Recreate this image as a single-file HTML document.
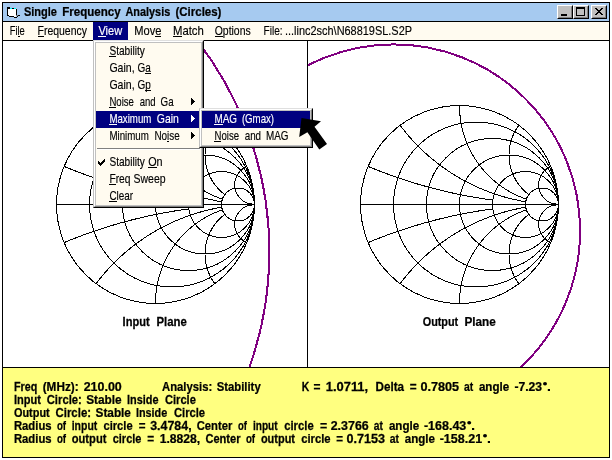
<!DOCTYPE html><html><head><meta charset="utf-8"><title>Single Frequency Analysis (Circles)</title><style>
html,body{margin:0;padding:0;background:#fff;}
body{width:612px;height:460px;overflow:hidden;position:relative;font-family:"Liberation Sans",sans-serif;color:#000;}
.abs{position:absolute;}
#frame{left:2px;top:2px;width:608px;height:456px;box-sizing:border-box;border:1px solid #000;background:#fff;}
#title{left:3px;top:3px;width:606px;height:18px;background:#A6CAF0;}
#l1{left:3px;top:21px;width:606px;height:1px;background:#000;}
#mbar{left:3px;top:22px;width:606px;height:18px;background:#FFFBF0;}
#l2{left:3px;top:40px;width:606px;height:1px;background:#000;}
#div{left:307px;top:41px;width:1px;height:326px;background:#000;}
#l3{left:3px;top:367px;width:606px;height:1px;background:#000;}
#ypan{left:3px;top:368px;width:606px;height:89px;background:#FFFF80;}
.btn{position:absolute;top:5px;width:16px;height:14px;box-sizing:border-box;background:#C0C0C0;border:1px solid;border-color:#fff #000 #000 #fff;}
.btn:after{content:"";position:absolute;left:0;top:0;right:0;bottom:0;border:1px solid;border-color:#C0C0C0 #808080 #808080 #C0C0C0;}
.menu{position:absolute;box-sizing:border-box;background:#FFFBF0;border:1px solid;border-color:#DFDFDF #000 #000 #C0C0C0;}
.menu:before{content:"";position:absolute;left:0;top:0;right:0;bottom:0;border:1px solid;border-color:#fff #808080 #808080 #fff;}
.menu:after{content:"";position:absolute;left:1px;top:1px;right:1px;bottom:1px;border:1px solid #C0C0C0;}
.hl{position:absolute;background:#000080;}
svg{position:absolute;left:0;top:0;}
svg text{font-family:"Liberation Sans",sans-serif;}
.txt{will-change:transform;}
.txt text[font-weight=bold]{stroke:#000;stroke-width:0.25px;}
.txt text[font-weight=normal]{stroke:currentColor;stroke-width:0.15px;}
</style></head><body>
<div id="frame" class="abs"></div>
<div id="title" class="abs"></div><div id="l1" class="abs"></div><div id="mbar" class="abs"></div><div id="l2" class="abs"></div>
<div id="div" class="abs"></div><div id="l3" class="abs"></div><div id="ypan" class="abs"></div>
<svg width="612" height="460" viewBox="0 0 612 460">
<defs><clipPath id="cl"><rect x="3" y="41" width="304" height="326"/></clipPath><clipPath id="cr"><rect x="308" y="41" width="301" height="326"/></clipPath></defs>
<g fill="none" stroke="#000" stroke-width="1" shape-rendering="crispEdges">
<circle cx="155.50" cy="204.50" r="99.00"/>
<circle cx="172.00" cy="204.50" r="82.50"/>
<circle cx="188.50" cy="204.50" r="66.00"/>
<circle cx="205.00" cy="204.50" r="49.50"/>
<circle cx="221.50" cy="204.50" r="33.00"/>
<circle cx="238.00" cy="204.50" r="16.50"/>
<line x1="56.50" y1="204.50" x2="254.50" y2="204.50"/>
<polyline points="64.12,166.42 64.14,166.43 64.21,166.46 64.33,166.51 64.51,166.59 64.72,166.68 64.99,166.79 65.30,166.92 65.67,167.07 66.07,167.23 66.53,167.42 67.03,167.62 67.57,167.85 68.16,168.09 68.79,168.34 69.46,168.61 70.17,168.90 70.93,169.20 71.72,169.52 72.55,169.85 73.42,170.19 74.33,170.55 75.27,170.91 76.24,171.29 77.25,171.68 78.28,172.07 79.35,172.48 80.45,172.89 81.57,173.31 82.72,173.74 83.89,174.17 85.09,174.61 86.31,175.05 87.55,175.50 88.81,175.95 90.09,176.40 91.39,176.85 92.70,177.31 94.03,177.77 95.37,178.22 96.72,178.68 98.09,179.14 99.46,179.59 100.85,180.05 102.24,180.50 103.64,180.95 105.04,181.40 106.45,181.84 107.87,182.28 109.28,182.72 110.70,183.15 112.12,183.58 113.54,184.00 114.96,184.42 116.37,184.84 117.79,185.25 119.20,185.65 120.61,186.05 122.01,186.44 123.41,186.83 124.81,187.21 126.19,187.58 127.57,187.95 128.95,188.31 130.31,188.67 131.67,189.02 133.02,189.36 134.36,189.70 135.69,190.03 137.02,190.36 138.33,190.67 139.63,190.99 140.92,191.29 142.20,191.59 143.47,191.89 144.73,192.17 145.97,192.46 147.21,192.73 148.43,193.00 149.64,193.27 150.84,193.52 152.03,193.78 153.20,194.02 154.36,194.27 155.51,194.50 156.65,194.73 157.77,194.96 158.88,195.18 159.98,195.39 161.07,195.60 162.14,195.81 163.20,196.01 164.25,196.20 165.29,196.39 166.31,196.58 167.32,196.76 168.32,196.94 169.31,197.11 170.28,197.28 171.24,197.45 172.19,197.61 173.13,197.77 174.06,197.92 174.97,198.07 175.87,198.22 176.76,198.36 177.64,198.50 178.51,198.63 179.37,198.76 180.21,198.89 181.04,199.02 181.87,199.14 182.68,199.26 183.48,199.38 184.27,199.49 185.05,199.60 185.82,199.71 186.58,199.82 187.32,199.92 188.06,200.02 188.79,200.12"/>
<polyline points="64.12,242.58 64.14,242.57 64.21,242.54 64.33,242.49 64.51,242.41 64.72,242.32 64.99,242.21 65.30,242.08 65.67,241.93 66.07,241.77 66.53,241.58 67.03,241.38 67.57,241.15 68.16,240.91 68.79,240.66 69.46,240.39 70.17,240.10 70.93,239.80 71.72,239.48 72.55,239.15 73.42,238.81 74.33,238.45 75.27,238.09 76.24,237.71 77.25,237.32 78.28,236.93 79.35,236.52 80.45,236.11 81.57,235.69 82.72,235.26 83.89,234.83 85.09,234.39 86.31,233.95 87.55,233.50 88.81,233.05 90.09,232.60 91.39,232.15 92.70,231.69 94.03,231.23 95.37,230.78 96.72,230.32 98.09,229.86 99.46,229.41 100.85,228.95 102.24,228.50 103.64,228.05 105.04,227.60 106.45,227.16 107.87,226.72 109.28,226.28 110.70,225.85 112.12,225.42 113.54,225.00 114.96,224.58 116.37,224.16 117.79,223.75 119.20,223.35 120.61,222.95 122.01,222.56 123.41,222.17 124.81,221.79 126.19,221.42 127.57,221.05 128.95,220.69 130.31,220.33 131.67,219.98 133.02,219.64 134.36,219.30 135.69,218.97 137.02,218.64 138.33,218.33 139.63,218.01 140.92,217.71 142.20,217.41 143.47,217.11 144.73,216.83 145.97,216.54 147.21,216.27 148.43,216.00 149.64,215.73 150.84,215.48 152.03,215.22 153.20,214.98 154.36,214.73 155.51,214.50 156.65,214.27 157.77,214.04 158.88,213.82 159.98,213.61 161.07,213.40 162.14,213.19 163.20,212.99 164.25,212.80 165.29,212.61 166.31,212.42 167.32,212.24 168.32,212.06 169.31,211.89 170.28,211.72 171.24,211.55 172.19,211.39 173.13,211.23 174.06,211.08 174.97,210.93 175.87,210.78 176.76,210.64 177.64,210.50 178.51,210.37 179.37,210.24 180.21,210.11 181.04,209.98 181.87,209.86 182.68,209.74 183.48,209.62 184.27,209.51 185.05,209.40 185.82,209.29 186.58,209.18 187.32,209.08 188.06,208.98 188.79,208.88"/>
<polyline points="96.10,125.30 96.13,125.34 96.23,125.48 96.40,125.69 96.63,126.00 96.92,126.39 97.28,126.86 97.71,127.42 98.20,128.05 98.75,128.76 99.37,129.54 100.05,130.39 100.78,131.30 101.58,132.28 102.44,133.32 103.36,134.40 104.33,135.54 105.35,136.73 106.43,137.95 107.56,139.21 108.74,140.51 109.97,141.83 111.24,143.18 112.55,144.54 113.91,145.92 115.30,147.31 116.73,148.71 118.20,150.11 119.69,151.52 121.21,152.92 122.76,154.31 124.33,155.70 125.93,157.08 127.54,158.44 129.17,159.78 130.81,161.11 132.46,162.42 134.12,163.70 135.79,164.97 137.46,166.20 139.13,167.42 140.81,168.60 142.48,169.77 144.15,170.90 145.81,172.00 147.47,173.08 149.12,174.13 150.75,175.14 152.38,176.13 153.99,177.09 155.59,178.03 157.18,178.93 158.75,179.81 160.30,180.66 161.83,181.48 163.35,182.27 164.85,183.04 166.33,183.78 167.79,184.50 169.22,185.20 170.64,185.86 172.04,186.51 173.41,187.13 174.77,187.74 176.10,188.32 177.41,188.88 178.70,189.41 179.96,189.93 181.21,190.44 182.43,190.92 183.63,191.38 184.81,191.83 185.97,192.26 187.11,192.68 188.23,193.08 189.32,193.46 190.40,193.84 191.45,194.19 192.49,194.54 193.50,194.87 194.50,195.19 195.47,195.50 196.43,195.79 197.37,196.08 198.29,196.35 199.19,196.62 200.08,196.87 200.94,197.12 201.79,197.36 202.63,197.58 203.44,197.80 204.24,198.02 205.03,198.22 205.80,198.42 206.55,198.61 207.29,198.79 208.02,198.97 208.73,199.14 209.42,199.30 210.10,199.46 210.77,199.61 211.43,199.76 212.07,199.90 212.70,200.04 213.32,200.17 213.93,200.30 214.52,200.42 215.10,200.54 215.67,200.66 216.23,200.77 216.78,200.87 217.32,200.98 217.85,201.08 218.37,201.18 218.87,201.27 219.37,201.36 219.86,201.45 220.34,201.53 220.81,201.61 221.27,201.69 221.73,201.77"/>
<polyline points="96.10,283.70 96.13,283.66 96.23,283.52 96.40,283.31 96.63,283.00 96.92,282.61 97.28,282.14 97.71,281.58 98.20,280.95 98.75,280.24 99.37,279.46 100.05,278.61 100.78,277.70 101.58,276.72 102.44,275.68 103.36,274.60 104.33,273.46 105.35,272.27 106.43,271.05 107.56,269.79 108.74,268.49 109.97,267.17 111.24,265.82 112.55,264.46 113.91,263.08 115.30,261.69 116.73,260.29 118.20,258.89 119.69,257.48 121.21,256.08 122.76,254.69 124.33,253.30 125.93,251.92 127.54,250.56 129.17,249.22 130.81,247.89 132.46,246.58 134.12,245.30 135.79,244.03 137.46,242.80 139.13,241.58 140.81,240.40 142.48,239.23 144.15,238.10 145.81,237.00 147.47,235.92 149.12,234.87 150.75,233.86 152.38,232.87 153.99,231.91 155.59,230.97 157.18,230.07 158.75,229.19 160.30,228.34 161.83,227.52 163.35,226.73 164.85,225.96 166.33,225.22 167.79,224.50 169.22,223.80 170.64,223.14 172.04,222.49 173.41,221.87 174.77,221.26 176.10,220.68 177.41,220.12 178.70,219.59 179.96,219.07 181.21,218.56 182.43,218.08 183.63,217.62 184.81,217.17 185.97,216.74 187.11,216.32 188.23,215.92 189.32,215.54 190.40,215.16 191.45,214.81 192.49,214.46 193.50,214.13 194.50,213.81 195.47,213.50 196.43,213.21 197.37,212.92 198.29,212.65 199.19,212.38 200.08,212.13 200.94,211.88 201.79,211.64 202.63,211.42 203.44,211.20 204.24,210.98 205.03,210.78 205.80,210.58 206.55,210.39 207.29,210.21 208.02,210.03 208.73,209.86 209.42,209.70 210.10,209.54 210.77,209.39 211.43,209.24 212.07,209.10 212.70,208.96 213.32,208.83 213.93,208.70 214.52,208.58 215.10,208.46 215.67,208.34 216.23,208.23 216.78,208.13 217.32,208.02 217.85,207.92 218.37,207.82 218.87,207.73 219.37,207.64 219.86,207.55 220.34,207.47 220.81,207.39 221.27,207.31 221.73,207.23"/>
<polyline points="155.50,105.50 155.50,105.53 155.50,105.64 155.50,105.81 155.50,106.05 155.50,106.36 155.51,106.73 155.51,107.17 155.52,107.68 155.54,108.25 155.56,108.88 155.58,109.57 155.62,110.33 155.66,111.14 155.71,112.01 155.78,112.93 155.86,113.91 155.95,114.94 156.06,116.01 156.19,117.14 156.33,118.30 156.50,119.51 156.68,120.76 156.89,122.04 157.12,123.35 157.38,124.70 157.66,126.07 157.97,127.47 158.30,128.89 158.66,130.32 159.05,131.78 159.47,133.24 159.91,134.72 160.38,136.21 160.88,137.70 161.41,139.19 161.96,140.68 162.54,142.17 163.15,143.65 163.78,145.13 164.44,146.60 165.11,148.06 165.82,149.50 166.54,150.93 167.28,152.34 168.05,153.74 168.83,155.11 169.63,156.47 170.44,157.80 171.27,159.11 172.12,160.40 172.97,161.66 173.84,162.90 174.71,164.11 175.60,165.29 176.49,166.45 177.39,167.58 178.29,168.69 179.19,169.77 180.10,170.82 181.02,171.84 181.93,172.84 182.84,173.81 183.75,174.75 184.66,175.67 185.57,176.56 186.47,177.42 187.37,178.26 188.26,179.08 189.15,179.87 190.04,180.64 190.91,181.38 191.79,182.10 192.65,182.80 193.50,183.48 194.35,184.13 195.19,184.77 196.02,185.38 196.84,185.97 197.65,186.55 198.45,187.11 199.24,187.64 200.02,188.16 200.80,188.67 201.56,189.15 202.31,189.62 203.05,190.08 203.78,190.52 204.50,190.95 205.21,191.36 205.91,191.75 206.60,192.14 207.28,192.51 207.94,192.87 208.60,193.22 209.25,193.55 209.89,193.88 210.51,194.19 211.13,194.49 211.74,194.79 212.33,195.07 212.92,195.35 213.50,195.61 214.07,195.87 214.63,196.12 215.18,196.36 215.72,196.59 216.25,196.81 216.77,197.03 217.29,197.24 217.79,197.44 218.29,197.64 218.77,197.83 219.25,198.01 219.73,198.19 220.19,198.36 220.65,198.53 221.09,198.69 221.53,198.85 221.97,199.00 222.39,199.15"/>
<polyline points="155.50,303.50 155.50,303.47 155.50,303.36 155.50,303.19 155.50,302.95 155.50,302.64 155.51,302.27 155.51,301.83 155.52,301.32 155.54,300.75 155.56,300.12 155.58,299.43 155.62,298.67 155.66,297.86 155.71,296.99 155.78,296.07 155.86,295.09 155.95,294.06 156.06,292.99 156.19,291.86 156.33,290.70 156.50,289.49 156.68,288.24 156.89,286.96 157.12,285.65 157.38,284.30 157.66,282.93 157.97,281.53 158.30,280.11 158.66,278.68 159.05,277.22 159.47,275.76 159.91,274.28 160.38,272.79 160.88,271.30 161.41,269.81 161.96,268.32 162.54,266.83 163.15,265.35 163.78,263.87 164.44,262.40 165.11,260.94 165.82,259.50 166.54,258.07 167.28,256.66 168.05,255.26 168.83,253.89 169.63,252.53 170.44,251.20 171.27,249.89 172.12,248.60 172.97,247.34 173.84,246.10 174.71,244.89 175.60,243.71 176.49,242.55 177.39,241.42 178.29,240.31 179.19,239.23 180.10,238.18 181.02,237.16 181.93,236.16 182.84,235.19 183.75,234.25 184.66,233.33 185.57,232.44 186.47,231.58 187.37,230.74 188.26,229.92 189.15,229.13 190.04,228.36 190.91,227.62 191.79,226.90 192.65,226.20 193.50,225.52 194.35,224.87 195.19,224.23 196.02,223.62 196.84,223.03 197.65,222.45 198.45,221.89 199.24,221.36 200.02,220.84 200.80,220.33 201.56,219.85 202.31,219.38 203.05,218.92 203.78,218.48 204.50,218.05 205.21,217.64 205.91,217.25 206.60,216.86 207.28,216.49 207.94,216.13 208.60,215.78 209.25,215.45 209.89,215.12 210.51,214.81 211.13,214.51 211.74,214.21 212.33,213.93 212.92,213.65 213.50,213.39 214.07,213.13 214.63,212.88 215.18,212.64 215.72,212.41 216.25,212.19 216.77,211.97 217.29,211.76 217.79,211.56 218.29,211.36 218.77,211.17 219.25,210.99 219.73,210.81 220.19,210.64 220.65,210.47 221.09,210.31 221.53,210.15 221.97,210.00 222.39,209.85"/>
<polyline points="214.90,125.30 214.89,125.31 214.87,125.34 214.83,125.40 214.77,125.48 214.70,125.58 214.61,125.70 214.50,125.84 214.38,126.01 214.25,126.19 214.10,126.40 213.93,126.64 213.76,126.89 213.57,127.17 213.36,127.47 213.15,127.79 212.92,128.14 212.69,128.50 212.44,128.89 212.19,129.31 211.93,129.74 211.66,130.20 211.39,130.68 211.11,131.18 210.82,131.71 210.54,132.25 210.25,132.82 209.96,133.41 209.67,134.02 209.38,134.65 209.09,135.30 208.80,135.97 208.52,136.66 208.25,137.37 207.97,138.10 207.71,138.85 207.45,139.61 207.21,140.39 206.97,141.18 206.74,141.99 206.52,142.82 206.32,143.65 206.13,144.50 205.95,145.36 205.78,146.23 205.63,147.11 205.50,148.00 205.38,148.90 205.27,149.80 205.19,150.71 205.12,151.63 205.06,152.54 205.02,153.46 205.00,154.39 205.00,155.31 205.02,156.23 205.05,157.15 205.10,158.07 205.16,158.99 205.24,159.90 205.34,160.80 205.46,161.70 205.59,162.60 205.73,163.49 205.89,164.37 206.07,165.24 206.26,166.10 206.46,166.95 206.68,167.80 206.91,168.63 207.16,169.45 207.41,170.26 207.68,171.05 207.95,171.84 208.24,172.61 208.53,173.37 208.84,174.12 209.15,174.85 209.48,175.57 209.81,176.27 210.14,176.97 210.48,177.65 210.83,178.31 211.19,178.96 211.54,179.60 211.91,180.22 212.27,180.83 212.65,181.43 213.02,182.01 213.39,182.58 213.77,183.14 214.15,183.68 214.54,184.21 214.92,184.72 215.30,185.23 215.69,185.72 216.07,186.20 216.46,186.67 216.84,187.12 217.22,187.57 217.61,188.00 217.99,188.42 218.37,188.83 218.75,189.23 219.12,189.62 219.50,190.00 219.87,190.37 220.24,190.73 220.61,191.08 220.97,191.42 221.34,191.75 221.70,192.07 222.05,192.38 222.41,192.69 222.76,192.98 223.11,193.27 223.45,193.55 223.79,193.83 224.13,194.09 224.47,194.35 224.80,194.60"/>
<polyline points="214.90,283.70 214.89,283.69 214.87,283.66 214.83,283.60 214.77,283.52 214.70,283.42 214.61,283.30 214.50,283.16 214.38,282.99 214.25,282.81 214.10,282.60 213.93,282.36 213.76,282.11 213.57,281.83 213.36,281.53 213.15,281.21 212.92,280.86 212.69,280.50 212.44,280.11 212.19,279.69 211.93,279.26 211.66,278.80 211.39,278.32 211.11,277.82 210.82,277.29 210.54,276.75 210.25,276.18 209.96,275.59 209.67,274.98 209.38,274.35 209.09,273.70 208.80,273.03 208.52,272.34 208.25,271.63 207.97,270.90 207.71,270.15 207.45,269.39 207.21,268.61 206.97,267.82 206.74,267.01 206.52,266.18 206.32,265.35 206.13,264.50 205.95,263.64 205.78,262.77 205.63,261.89 205.50,261.00 205.38,260.10 205.27,259.20 205.19,258.29 205.12,257.37 205.06,256.46 205.02,255.54 205.00,254.61 205.00,253.69 205.02,252.77 205.05,251.85 205.10,250.93 205.16,250.01 205.24,249.10 205.34,248.20 205.46,247.30 205.59,246.40 205.73,245.51 205.89,244.63 206.07,243.76 206.26,242.90 206.46,242.05 206.68,241.20 206.91,240.37 207.16,239.55 207.41,238.74 207.68,237.95 207.95,237.16 208.24,236.39 208.53,235.63 208.84,234.88 209.15,234.15 209.48,233.43 209.81,232.73 210.14,232.03 210.48,231.35 210.83,230.69 211.19,230.04 211.54,229.40 211.91,228.78 212.27,228.17 212.65,227.57 213.02,226.99 213.39,226.42 213.77,225.86 214.15,225.32 214.54,224.79 214.92,224.28 215.30,223.77 215.69,223.28 216.07,222.80 216.46,222.33 216.84,221.88 217.22,221.43 217.61,221.00 217.99,220.58 218.37,220.17 218.75,219.77 219.12,219.38 219.50,219.00 219.87,218.63 220.24,218.27 220.61,217.92 220.97,217.58 221.34,217.25 221.70,216.93 222.05,216.62 222.41,216.31 222.76,216.02 223.11,215.73 223.45,215.45 223.79,215.17 224.13,214.91 224.47,214.65 224.80,214.40"/>
<polyline points="246.88,166.42 246.88,166.43 246.82,166.45 246.67,166.52 246.37,166.65 245.89,166.87 245.18,167.23 244.24,167.77 243.05,168.55 241.65,169.64 240.10,171.12 238.51,173.03 237.03,175.38 235.82,178.14 235.02,181.17 234.70,184.33 234.89,187.42 235.51,190.30 236.46,192.86 237.63,195.06 238.90,196.90 240.21,198.40 241.47,199.61 242.67,200.58 243.78,201.35 244.79,201.96 245.71,202.44 246.53,202.82 247.26,203.13 247.92,203.37 248.50,203.57 249.03,203.73 249.50,203.86 249.91,203.96 250.29,204.05 250.63,204.12 250.93,204.18 251.20,204.22 251.45,204.26 251.67,204.30 251.87,204.33 252.06,204.35 252.23,204.37 252.38,204.39 252.52,204.40 252.64,204.41 252.76,204.42 252.87,204.43 252.97,204.44 253.06,204.45 253.14,204.45 253.22,204.46 253.29,204.46 253.36,204.47 253.42,204.47 253.48,204.47 253.53,204.48 253.58,204.48 253.63,204.48 253.67,204.48 253.71,204.48 253.75,204.49 253.79,204.49 253.82,204.49 253.85,204.49 253.88,204.49 253.91,204.49 253.93,204.49 253.96,204.49 253.98,204.49 254.00,204.49 254.02,204.49 254.04,204.49 254.06,204.50 254.08,204.50 254.10,204.50 254.11,204.50 254.13,204.50 254.14,204.50 254.15,204.50 254.17,204.50 254.18,204.50 254.19,204.50 254.20,204.50 254.21,204.50 254.22,204.50 254.23,204.50 254.24,204.50 254.25,204.50 254.26,204.50 254.27,204.50 254.27,204.50 254.28,204.50 254.29,204.50 254.29,204.50 254.30,204.50 254.31,204.50 254.31,204.50 254.32,204.50 254.32,204.50 254.33,204.50 254.33,204.50 254.34,204.50 254.34,204.50 254.35,204.50 254.35,204.50 254.36,204.50 254.36,204.50 254.36,204.50 254.37,204.50 254.37,204.50 254.37,204.50 254.38,204.50 254.38,204.50 254.38,204.50 254.39,204.50 254.39,204.50 254.39,204.50 254.40,204.50 254.40,204.50 254.40,204.50"/>
<polyline points="246.88,242.58 246.88,242.57 246.82,242.55 246.67,242.48 246.37,242.35 245.89,242.13 245.18,241.77 244.24,241.23 243.05,240.45 241.65,239.36 240.10,237.88 238.51,235.97 237.03,233.62 235.82,230.86 235.02,227.83 234.70,224.67 234.89,221.58 235.51,218.70 236.46,216.14 237.63,213.94 238.90,212.10 240.21,210.60 241.47,209.39 242.67,208.42 243.78,207.65 244.79,207.04 245.71,206.56 246.53,206.18 247.26,205.87 247.92,205.63 248.50,205.43 249.03,205.27 249.50,205.14 249.91,205.04 250.29,204.95 250.63,204.88 250.93,204.82 251.20,204.78 251.45,204.74 251.67,204.70 251.87,204.67 252.06,204.65 252.23,204.63 252.38,204.61 252.52,204.60 252.64,204.59 252.76,204.58 252.87,204.57 252.97,204.56 253.06,204.55 253.14,204.55 253.22,204.54 253.29,204.54 253.36,204.53 253.42,204.53 253.48,204.53 253.53,204.52 253.58,204.52 253.63,204.52 253.67,204.52 253.71,204.52 253.75,204.51 253.79,204.51 253.82,204.51 253.85,204.51 253.88,204.51 253.91,204.51 253.93,204.51 253.96,204.51 253.98,204.51 254.00,204.51 254.02,204.51 254.04,204.51 254.06,204.50 254.08,204.50 254.10,204.50 254.11,204.50 254.13,204.50 254.14,204.50 254.15,204.50 254.17,204.50 254.18,204.50 254.19,204.50 254.20,204.50 254.21,204.50 254.22,204.50 254.23,204.50 254.24,204.50 254.25,204.50 254.26,204.50 254.27,204.50 254.27,204.50 254.28,204.50 254.29,204.50 254.29,204.50 254.30,204.50 254.31,204.50 254.31,204.50 254.32,204.50 254.32,204.50 254.33,204.50 254.33,204.50 254.34,204.50 254.34,204.50 254.35,204.50 254.35,204.50 254.36,204.50 254.36,204.50 254.36,204.50 254.37,204.50 254.37,204.50 254.37,204.50 254.38,204.50 254.38,204.50 254.38,204.50 254.39,204.50 254.39,204.50 254.39,204.50 254.40,204.50 254.40,204.50 254.40,204.50"/>
<rect x="247" y="203" width="5" height="3" fill="#000" stroke="none"/>
<circle cx="459.50" cy="204.50" r="99.00"/>
<circle cx="476.00" cy="204.50" r="82.50"/>
<circle cx="492.50" cy="204.50" r="66.00"/>
<circle cx="509.00" cy="204.50" r="49.50"/>
<circle cx="525.50" cy="204.50" r="33.00"/>
<circle cx="542.00" cy="204.50" r="16.50"/>
<line x1="360.50" y1="204.50" x2="558.50" y2="204.50"/>
<polyline points="368.12,166.42 368.14,166.43 368.21,166.46 368.33,166.51 368.51,166.59 368.72,166.68 368.99,166.79 369.30,166.92 369.67,167.07 370.07,167.23 370.53,167.42 371.03,167.62 371.57,167.85 372.16,168.09 372.79,168.34 373.46,168.61 374.17,168.90 374.93,169.20 375.72,169.52 376.55,169.85 377.42,170.19 378.33,170.55 379.27,170.91 380.24,171.29 381.25,171.68 382.28,172.07 383.35,172.48 384.45,172.89 385.57,173.31 386.72,173.74 387.89,174.17 389.09,174.61 390.31,175.05 391.55,175.50 392.81,175.95 394.09,176.40 395.39,176.85 396.70,177.31 398.03,177.77 399.37,178.22 400.72,178.68 402.09,179.14 403.46,179.59 404.85,180.05 406.24,180.50 407.64,180.95 409.04,181.40 410.45,181.84 411.87,182.28 413.28,182.72 414.70,183.15 416.12,183.58 417.54,184.00 418.96,184.42 420.37,184.84 421.79,185.25 423.20,185.65 424.61,186.05 426.01,186.44 427.41,186.83 428.81,187.21 430.19,187.58 431.57,187.95 432.95,188.31 434.31,188.67 435.67,189.02 437.02,189.36 438.36,189.70 439.69,190.03 441.02,190.36 442.33,190.67 443.63,190.99 444.92,191.29 446.20,191.59 447.47,191.89 448.73,192.17 449.97,192.46 451.21,192.73 452.43,193.00 453.64,193.27 454.84,193.52 456.03,193.78 457.20,194.02 458.36,194.27 459.51,194.50 460.65,194.73 461.77,194.96 462.88,195.18 463.98,195.39 465.07,195.60 466.14,195.81 467.20,196.01 468.25,196.20 469.29,196.39 470.31,196.58 471.32,196.76 472.32,196.94 473.31,197.11 474.28,197.28 475.24,197.45 476.19,197.61 477.13,197.77 478.06,197.92 478.97,198.07 479.87,198.22 480.76,198.36 481.64,198.50 482.51,198.63 483.37,198.76 484.21,198.89 485.04,199.02 485.87,199.14 486.68,199.26 487.48,199.38 488.27,199.49 489.05,199.60 489.82,199.71 490.58,199.82 491.32,199.92 492.06,200.02 492.79,200.12"/>
<polyline points="368.12,242.58 368.14,242.57 368.21,242.54 368.33,242.49 368.51,242.41 368.72,242.32 368.99,242.21 369.30,242.08 369.67,241.93 370.07,241.77 370.53,241.58 371.03,241.38 371.57,241.15 372.16,240.91 372.79,240.66 373.46,240.39 374.17,240.10 374.93,239.80 375.72,239.48 376.55,239.15 377.42,238.81 378.33,238.45 379.27,238.09 380.24,237.71 381.25,237.32 382.28,236.93 383.35,236.52 384.45,236.11 385.57,235.69 386.72,235.26 387.89,234.83 389.09,234.39 390.31,233.95 391.55,233.50 392.81,233.05 394.09,232.60 395.39,232.15 396.70,231.69 398.03,231.23 399.37,230.78 400.72,230.32 402.09,229.86 403.46,229.41 404.85,228.95 406.24,228.50 407.64,228.05 409.04,227.60 410.45,227.16 411.87,226.72 413.28,226.28 414.70,225.85 416.12,225.42 417.54,225.00 418.96,224.58 420.37,224.16 421.79,223.75 423.20,223.35 424.61,222.95 426.01,222.56 427.41,222.17 428.81,221.79 430.19,221.42 431.57,221.05 432.95,220.69 434.31,220.33 435.67,219.98 437.02,219.64 438.36,219.30 439.69,218.97 441.02,218.64 442.33,218.33 443.63,218.01 444.92,217.71 446.20,217.41 447.47,217.11 448.73,216.83 449.97,216.54 451.21,216.27 452.43,216.00 453.64,215.73 454.84,215.48 456.03,215.22 457.20,214.98 458.36,214.73 459.51,214.50 460.65,214.27 461.77,214.04 462.88,213.82 463.98,213.61 465.07,213.40 466.14,213.19 467.20,212.99 468.25,212.80 469.29,212.61 470.31,212.42 471.32,212.24 472.32,212.06 473.31,211.89 474.28,211.72 475.24,211.55 476.19,211.39 477.13,211.23 478.06,211.08 478.97,210.93 479.87,210.78 480.76,210.64 481.64,210.50 482.51,210.37 483.37,210.24 484.21,210.11 485.04,209.98 485.87,209.86 486.68,209.74 487.48,209.62 488.27,209.51 489.05,209.40 489.82,209.29 490.58,209.18 491.32,209.08 492.06,208.98 492.79,208.88"/>
<polyline points="400.10,125.30 400.13,125.34 400.23,125.48 400.40,125.69 400.63,126.00 400.92,126.39 401.28,126.86 401.71,127.42 402.20,128.05 402.75,128.76 403.37,129.54 404.05,130.39 404.78,131.30 405.58,132.28 406.44,133.32 407.36,134.40 408.33,135.54 409.35,136.73 410.43,137.95 411.56,139.21 412.74,140.51 413.97,141.83 415.24,143.18 416.55,144.54 417.91,145.92 419.30,147.31 420.73,148.71 422.20,150.11 423.69,151.52 425.21,152.92 426.76,154.31 428.33,155.70 429.93,157.08 431.54,158.44 433.17,159.78 434.81,161.11 436.46,162.42 438.12,163.70 439.79,164.97 441.46,166.20 443.13,167.42 444.81,168.60 446.48,169.77 448.15,170.90 449.81,172.00 451.47,173.08 453.12,174.13 454.75,175.14 456.38,176.13 457.99,177.09 459.59,178.03 461.18,178.93 462.75,179.81 464.30,180.66 465.83,181.48 467.35,182.27 468.85,183.04 470.33,183.78 471.79,184.50 473.22,185.20 474.64,185.86 476.04,186.51 477.41,187.13 478.77,187.74 480.10,188.32 481.41,188.88 482.70,189.41 483.96,189.93 485.21,190.44 486.43,190.92 487.63,191.38 488.81,191.83 489.97,192.26 491.11,192.68 492.23,193.08 493.32,193.46 494.40,193.84 495.45,194.19 496.49,194.54 497.50,194.87 498.50,195.19 499.47,195.50 500.43,195.79 501.37,196.08 502.29,196.35 503.19,196.62 504.08,196.87 504.94,197.12 505.79,197.36 506.63,197.58 507.44,197.80 508.24,198.02 509.03,198.22 509.80,198.42 510.55,198.61 511.29,198.79 512.02,198.97 512.73,199.14 513.42,199.30 514.10,199.46 514.77,199.61 515.43,199.76 516.07,199.90 516.70,200.04 517.32,200.17 517.93,200.30 518.52,200.42 519.10,200.54 519.67,200.66 520.23,200.77 520.78,200.87 521.32,200.98 521.85,201.08 522.37,201.18 522.87,201.27 523.37,201.36 523.86,201.45 524.34,201.53 524.81,201.61 525.27,201.69 525.73,201.77"/>
<polyline points="400.10,283.70 400.13,283.66 400.23,283.52 400.40,283.31 400.63,283.00 400.92,282.61 401.28,282.14 401.71,281.58 402.20,280.95 402.75,280.24 403.37,279.46 404.05,278.61 404.78,277.70 405.58,276.72 406.44,275.68 407.36,274.60 408.33,273.46 409.35,272.27 410.43,271.05 411.56,269.79 412.74,268.49 413.97,267.17 415.24,265.82 416.55,264.46 417.91,263.08 419.30,261.69 420.73,260.29 422.20,258.89 423.69,257.48 425.21,256.08 426.76,254.69 428.33,253.30 429.93,251.92 431.54,250.56 433.17,249.22 434.81,247.89 436.46,246.58 438.12,245.30 439.79,244.03 441.46,242.80 443.13,241.58 444.81,240.40 446.48,239.23 448.15,238.10 449.81,237.00 451.47,235.92 453.12,234.87 454.75,233.86 456.38,232.87 457.99,231.91 459.59,230.97 461.18,230.07 462.75,229.19 464.30,228.34 465.83,227.52 467.35,226.73 468.85,225.96 470.33,225.22 471.79,224.50 473.22,223.80 474.64,223.14 476.04,222.49 477.41,221.87 478.77,221.26 480.10,220.68 481.41,220.12 482.70,219.59 483.96,219.07 485.21,218.56 486.43,218.08 487.63,217.62 488.81,217.17 489.97,216.74 491.11,216.32 492.23,215.92 493.32,215.54 494.40,215.16 495.45,214.81 496.49,214.46 497.50,214.13 498.50,213.81 499.47,213.50 500.43,213.21 501.37,212.92 502.29,212.65 503.19,212.38 504.08,212.13 504.94,211.88 505.79,211.64 506.63,211.42 507.44,211.20 508.24,210.98 509.03,210.78 509.80,210.58 510.55,210.39 511.29,210.21 512.02,210.03 512.73,209.86 513.42,209.70 514.10,209.54 514.77,209.39 515.43,209.24 516.07,209.10 516.70,208.96 517.32,208.83 517.93,208.70 518.52,208.58 519.10,208.46 519.67,208.34 520.23,208.23 520.78,208.13 521.32,208.02 521.85,207.92 522.37,207.82 522.87,207.73 523.37,207.64 523.86,207.55 524.34,207.47 524.81,207.39 525.27,207.31 525.73,207.23"/>
<polyline points="459.50,105.50 459.50,105.53 459.50,105.64 459.50,105.81 459.50,106.05 459.50,106.36 459.51,106.73 459.51,107.17 459.52,107.68 459.54,108.25 459.56,108.88 459.58,109.57 459.62,110.33 459.66,111.14 459.71,112.01 459.78,112.93 459.86,113.91 459.95,114.94 460.06,116.01 460.19,117.14 460.33,118.30 460.50,119.51 460.68,120.76 460.89,122.04 461.12,123.35 461.38,124.70 461.66,126.07 461.97,127.47 462.30,128.89 462.66,130.32 463.05,131.78 463.47,133.24 463.91,134.72 464.38,136.21 464.88,137.70 465.41,139.19 465.96,140.68 466.54,142.17 467.15,143.65 467.78,145.13 468.44,146.60 469.11,148.06 469.82,149.50 470.54,150.93 471.28,152.34 472.05,153.74 472.83,155.11 473.63,156.47 474.44,157.80 475.27,159.11 476.12,160.40 476.97,161.66 477.84,162.90 478.71,164.11 479.60,165.29 480.49,166.45 481.39,167.58 482.29,168.69 483.19,169.77 484.10,170.82 485.02,171.84 485.93,172.84 486.84,173.81 487.75,174.75 488.66,175.67 489.57,176.56 490.47,177.42 491.37,178.26 492.26,179.08 493.15,179.87 494.04,180.64 494.91,181.38 495.79,182.10 496.65,182.80 497.50,183.48 498.35,184.13 499.19,184.77 500.02,185.38 500.84,185.97 501.65,186.55 502.45,187.11 503.24,187.64 504.02,188.16 504.80,188.67 505.56,189.15 506.31,189.62 507.05,190.08 507.78,190.52 508.50,190.95 509.21,191.36 509.91,191.75 510.60,192.14 511.28,192.51 511.94,192.87 512.60,193.22 513.25,193.55 513.89,193.88 514.51,194.19 515.13,194.49 515.74,194.79 516.33,195.07 516.92,195.35 517.50,195.61 518.07,195.87 518.63,196.12 519.18,196.36 519.72,196.59 520.25,196.81 520.77,197.03 521.29,197.24 521.79,197.44 522.29,197.64 522.77,197.83 523.25,198.01 523.73,198.19 524.19,198.36 524.65,198.53 525.09,198.69 525.53,198.85 525.97,199.00 526.39,199.15"/>
<polyline points="459.50,303.50 459.50,303.47 459.50,303.36 459.50,303.19 459.50,302.95 459.50,302.64 459.51,302.27 459.51,301.83 459.52,301.32 459.54,300.75 459.56,300.12 459.58,299.43 459.62,298.67 459.66,297.86 459.71,296.99 459.78,296.07 459.86,295.09 459.95,294.06 460.06,292.99 460.19,291.86 460.33,290.70 460.50,289.49 460.68,288.24 460.89,286.96 461.12,285.65 461.38,284.30 461.66,282.93 461.97,281.53 462.30,280.11 462.66,278.68 463.05,277.22 463.47,275.76 463.91,274.28 464.38,272.79 464.88,271.30 465.41,269.81 465.96,268.32 466.54,266.83 467.15,265.35 467.78,263.87 468.44,262.40 469.11,260.94 469.82,259.50 470.54,258.07 471.28,256.66 472.05,255.26 472.83,253.89 473.63,252.53 474.44,251.20 475.27,249.89 476.12,248.60 476.97,247.34 477.84,246.10 478.71,244.89 479.60,243.71 480.49,242.55 481.39,241.42 482.29,240.31 483.19,239.23 484.10,238.18 485.02,237.16 485.93,236.16 486.84,235.19 487.75,234.25 488.66,233.33 489.57,232.44 490.47,231.58 491.37,230.74 492.26,229.92 493.15,229.13 494.04,228.36 494.91,227.62 495.79,226.90 496.65,226.20 497.50,225.52 498.35,224.87 499.19,224.23 500.02,223.62 500.84,223.03 501.65,222.45 502.45,221.89 503.24,221.36 504.02,220.84 504.80,220.33 505.56,219.85 506.31,219.38 507.05,218.92 507.78,218.48 508.50,218.05 509.21,217.64 509.91,217.25 510.60,216.86 511.28,216.49 511.94,216.13 512.60,215.78 513.25,215.45 513.89,215.12 514.51,214.81 515.13,214.51 515.74,214.21 516.33,213.93 516.92,213.65 517.50,213.39 518.07,213.13 518.63,212.88 519.18,212.64 519.72,212.41 520.25,212.19 520.77,211.97 521.29,211.76 521.79,211.56 522.29,211.36 522.77,211.17 523.25,210.99 523.73,210.81 524.19,210.64 524.65,210.47 525.09,210.31 525.53,210.15 525.97,210.00 526.39,209.85"/>
<polyline points="518.90,125.30 518.89,125.31 518.87,125.34 518.83,125.40 518.77,125.48 518.70,125.58 518.61,125.70 518.50,125.84 518.38,126.01 518.25,126.19 518.10,126.40 517.93,126.64 517.76,126.89 517.57,127.17 517.36,127.47 517.15,127.79 516.92,128.14 516.69,128.50 516.44,128.89 516.19,129.31 515.93,129.74 515.66,130.20 515.39,130.68 515.11,131.18 514.82,131.71 514.54,132.25 514.25,132.82 513.96,133.41 513.67,134.02 513.38,134.65 513.09,135.30 512.80,135.97 512.52,136.66 512.25,137.37 511.97,138.10 511.71,138.85 511.45,139.61 511.21,140.39 510.97,141.18 510.74,141.99 510.52,142.82 510.32,143.65 510.13,144.50 509.95,145.36 509.78,146.23 509.63,147.11 509.50,148.00 509.38,148.90 509.27,149.80 509.19,150.71 509.12,151.63 509.06,152.54 509.02,153.46 509.00,154.39 509.00,155.31 509.02,156.23 509.05,157.15 509.10,158.07 509.16,158.99 509.24,159.90 509.34,160.80 509.46,161.70 509.59,162.60 509.73,163.49 509.89,164.37 510.07,165.24 510.26,166.10 510.46,166.95 510.68,167.80 510.91,168.63 511.16,169.45 511.41,170.26 511.68,171.05 511.95,171.84 512.24,172.61 512.53,173.37 512.84,174.12 513.15,174.85 513.48,175.57 513.81,176.27 514.14,176.97 514.48,177.65 514.83,178.31 515.19,178.96 515.54,179.60 515.91,180.22 516.27,180.83 516.65,181.43 517.02,182.01 517.39,182.58 517.77,183.14 518.15,183.68 518.54,184.21 518.92,184.72 519.30,185.23 519.69,185.72 520.07,186.20 520.46,186.67 520.84,187.12 521.22,187.57 521.61,188.00 521.99,188.42 522.37,188.83 522.75,189.23 523.12,189.62 523.50,190.00 523.87,190.37 524.24,190.73 524.61,191.08 524.97,191.42 525.34,191.75 525.70,192.07 526.05,192.38 526.41,192.69 526.76,192.98 527.11,193.27 527.45,193.55 527.79,193.83 528.13,194.09 528.47,194.35 528.80,194.60"/>
<polyline points="518.90,283.70 518.89,283.69 518.87,283.66 518.83,283.60 518.77,283.52 518.70,283.42 518.61,283.30 518.50,283.16 518.38,282.99 518.25,282.81 518.10,282.60 517.93,282.36 517.76,282.11 517.57,281.83 517.36,281.53 517.15,281.21 516.92,280.86 516.69,280.50 516.44,280.11 516.19,279.69 515.93,279.26 515.66,278.80 515.39,278.32 515.11,277.82 514.82,277.29 514.54,276.75 514.25,276.18 513.96,275.59 513.67,274.98 513.38,274.35 513.09,273.70 512.80,273.03 512.52,272.34 512.25,271.63 511.97,270.90 511.71,270.15 511.45,269.39 511.21,268.61 510.97,267.82 510.74,267.01 510.52,266.18 510.32,265.35 510.13,264.50 509.95,263.64 509.78,262.77 509.63,261.89 509.50,261.00 509.38,260.10 509.27,259.20 509.19,258.29 509.12,257.37 509.06,256.46 509.02,255.54 509.00,254.61 509.00,253.69 509.02,252.77 509.05,251.85 509.10,250.93 509.16,250.01 509.24,249.10 509.34,248.20 509.46,247.30 509.59,246.40 509.73,245.51 509.89,244.63 510.07,243.76 510.26,242.90 510.46,242.05 510.68,241.20 510.91,240.37 511.16,239.55 511.41,238.74 511.68,237.95 511.95,237.16 512.24,236.39 512.53,235.63 512.84,234.88 513.15,234.15 513.48,233.43 513.81,232.73 514.14,232.03 514.48,231.35 514.83,230.69 515.19,230.04 515.54,229.40 515.91,228.78 516.27,228.17 516.65,227.57 517.02,226.99 517.39,226.42 517.77,225.86 518.15,225.32 518.54,224.79 518.92,224.28 519.30,223.77 519.69,223.28 520.07,222.80 520.46,222.33 520.84,221.88 521.22,221.43 521.61,221.00 521.99,220.58 522.37,220.17 522.75,219.77 523.12,219.38 523.50,219.00 523.87,218.63 524.24,218.27 524.61,217.92 524.97,217.58 525.34,217.25 525.70,216.93 526.05,216.62 526.41,216.31 526.76,216.02 527.11,215.73 527.45,215.45 527.79,215.17 528.13,214.91 528.47,214.65 528.80,214.40"/>
<polyline points="550.88,166.42 550.88,166.43 550.82,166.45 550.67,166.52 550.37,166.65 549.89,166.87 549.18,167.23 548.24,167.77 547.05,168.55 545.65,169.64 544.10,171.12 542.51,173.03 541.03,175.38 539.82,178.14 539.02,181.17 538.70,184.33 538.89,187.42 539.51,190.30 540.46,192.86 541.63,195.06 542.90,196.90 544.21,198.40 545.47,199.61 546.67,200.58 547.78,201.35 548.79,201.96 549.71,202.44 550.53,202.82 551.26,203.13 551.92,203.37 552.50,203.57 553.03,203.73 553.50,203.86 553.91,203.96 554.29,204.05 554.63,204.12 554.93,204.18 555.20,204.22 555.45,204.26 555.67,204.30 555.87,204.33 556.06,204.35 556.23,204.37 556.38,204.39 556.52,204.40 556.64,204.41 556.76,204.42 556.87,204.43 556.97,204.44 557.06,204.45 557.14,204.45 557.22,204.46 557.29,204.46 557.36,204.47 557.42,204.47 557.48,204.47 557.53,204.48 557.58,204.48 557.63,204.48 557.67,204.48 557.71,204.48 557.75,204.49 557.79,204.49 557.82,204.49 557.85,204.49 557.88,204.49 557.91,204.49 557.93,204.49 557.96,204.49 557.98,204.49 558.00,204.49 558.02,204.49 558.04,204.49 558.06,204.50 558.08,204.50 558.10,204.50 558.11,204.50 558.13,204.50 558.14,204.50 558.15,204.50 558.17,204.50 558.18,204.50 558.19,204.50 558.20,204.50 558.21,204.50 558.22,204.50 558.23,204.50 558.24,204.50 558.25,204.50 558.26,204.50 558.27,204.50 558.27,204.50 558.28,204.50 558.29,204.50 558.29,204.50 558.30,204.50 558.31,204.50 558.31,204.50 558.32,204.50 558.32,204.50 558.33,204.50 558.33,204.50 558.34,204.50 558.34,204.50 558.35,204.50 558.35,204.50 558.36,204.50 558.36,204.50 558.36,204.50 558.37,204.50 558.37,204.50 558.37,204.50 558.38,204.50 558.38,204.50 558.38,204.50 558.39,204.50 558.39,204.50 558.39,204.50 558.40,204.50 558.40,204.50 558.40,204.50"/>
<polyline points="550.88,242.58 550.88,242.57 550.82,242.55 550.67,242.48 550.37,242.35 549.89,242.13 549.18,241.77 548.24,241.23 547.05,240.45 545.65,239.36 544.10,237.88 542.51,235.97 541.03,233.62 539.82,230.86 539.02,227.83 538.70,224.67 538.89,221.58 539.51,218.70 540.46,216.14 541.63,213.94 542.90,212.10 544.21,210.60 545.47,209.39 546.67,208.42 547.78,207.65 548.79,207.04 549.71,206.56 550.53,206.18 551.26,205.87 551.92,205.63 552.50,205.43 553.03,205.27 553.50,205.14 553.91,205.04 554.29,204.95 554.63,204.88 554.93,204.82 555.20,204.78 555.45,204.74 555.67,204.70 555.87,204.67 556.06,204.65 556.23,204.63 556.38,204.61 556.52,204.60 556.64,204.59 556.76,204.58 556.87,204.57 556.97,204.56 557.06,204.55 557.14,204.55 557.22,204.54 557.29,204.54 557.36,204.53 557.42,204.53 557.48,204.53 557.53,204.52 557.58,204.52 557.63,204.52 557.67,204.52 557.71,204.52 557.75,204.51 557.79,204.51 557.82,204.51 557.85,204.51 557.88,204.51 557.91,204.51 557.93,204.51 557.96,204.51 557.98,204.51 558.00,204.51 558.02,204.51 558.04,204.51 558.06,204.50 558.08,204.50 558.10,204.50 558.11,204.50 558.13,204.50 558.14,204.50 558.15,204.50 558.17,204.50 558.18,204.50 558.19,204.50 558.20,204.50 558.21,204.50 558.22,204.50 558.23,204.50 558.24,204.50 558.25,204.50 558.26,204.50 558.27,204.50 558.27,204.50 558.28,204.50 558.29,204.50 558.29,204.50 558.30,204.50 558.31,204.50 558.31,204.50 558.32,204.50 558.32,204.50 558.33,204.50 558.33,204.50 558.34,204.50 558.34,204.50 558.35,204.50 558.35,204.50 558.36,204.50 558.36,204.50 558.36,204.50 558.37,204.50 558.37,204.50 558.37,204.50 558.38,204.50 558.38,204.50 558.38,204.50 558.39,204.50 558.39,204.50 558.39,204.50 558.40,204.50 558.40,204.50 558.40,204.50"/>
<rect x="551" y="203" width="5" height="3" fill="#000" stroke="none"/>
</g>
<g fill="none" stroke="#800080" stroke-width="2" shape-rendering="crispEdges">
<g clip-path="url(#cl)"><circle cx="-75.00" cy="251.69" r="344.36"/></g>
<g clip-path="url(#cr)"><circle cx="393.74" cy="230.79" r="186.40"/></g>
</g>
</svg>
<svg width="24" height="22" viewBox="0 0 24 22" shape-rendering="crispEdges"><rect x="8" y="8" width="8" height="8" fill="#fff"/><rect x="9" y="15" width="7" height="1" fill="#fff"/><rect x="14" y="16" width="2" height="1" fill="#fff"/><rect x="7" y="7" width="3" height="1" fill="#000"/><rect x="7" y="7" width="1" height="9" fill="#000"/><rect x="8" y="8" width="2" height="1" fill="#000"/><rect x="10" y="8" width="2" height="1" fill="#00FFFF"/><rect x="12" y="8" width="2" height="1" fill="#000"/><rect x="14" y="8" width="2" height="1" fill="#00FFFF"/><rect x="16" y="9" width="1" height="6" fill="#000"/><rect x="7" y="15" width="2" height="1" fill="#000"/><rect x="9" y="16" width="5" height="1" fill="#000"/><rect x="14" y="17" width="3" height="1" fill="#000"/><rect x="16" y="15" width="2" height="1" fill="#808080"/><rect x="18" y="15" width="2" height="1" fill="#000"/><rect x="17" y="16" width="1" height="1" fill="#000"/></svg>
<div class="btn" style="left:557px"></div><div class="btn" style="left:573px"></div><div class="btn" style="left:591px"></div>
<svg width="612" height="24" viewBox="0 0 612 24" shape-rendering="crispEdges"><rect x="561" y="14" width="6" height="2" fill="#000"/><rect x="576.5" y="7.5" width="8" height="8" fill="none" stroke="#000"/><rect x="576" y="7" width="9" height="2" fill="#000"/><rect x="595" y="8" width="2" height="1" fill="#000"/><rect x="601" y="8" width="2" height="1" fill="#000"/><rect x="596" y="9" width="2" height="1" fill="#000"/><rect x="600" y="9" width="2" height="1" fill="#000"/><rect x="597" y="10" width="2" height="1" fill="#000"/><rect x="599" y="10" width="2" height="1" fill="#000"/><rect x="598" y="11" width="2" height="1" fill="#000"/><rect x="597" y="12" width="2" height="1" fill="#000"/><rect x="599" y="12" width="2" height="1" fill="#000"/><rect x="596" y="13" width="2" height="1" fill="#000"/><rect x="600" y="13" width="2" height="1" fill="#000"/><rect x="595" y="14" width="2" height="1" fill="#000"/><rect x="601" y="14" width="2" height="1" fill="#000"/></svg>
<div class="hl" style="left:93px;top:22px;width:35px;height:18px"></div>
<div class="menu" style="left:93px;top:40px;width:111px;height:168px"></div>
<div class="hl" style="left:96px;top:111px;width:105px;height:17px"></div>
<div class="abs" style="left:97px;top:148px;width:103px;height:1px;background:#808080"></div><div class="abs" style="left:97px;top:149px;width:103px;height:1px;background:#fff"></div>
<svg width="612" height="460" viewBox="0 0 612 460" shape-rendering="crispEdges">
<path d="M191 98 v7 h1 v-1 h1 v-1 h1 v-1 h1 v-1 h-1 v-1 h-1 v-1 h-1 v-1 z" fill="#000"/>
<path d="M191 115 v7 h1 v-1 h1 v-1 h1 v-1 h1 v-1 h-1 v-1 h-1 v-1 h-1 v-1 z" fill="#fff"/>
<path d="M191 132 v7 h1 v-1 h1 v-1 h1 v-1 h1 v-1 h-1 v-1 h-1 v-1 h-1 v-1 z" fill="#000"/>
<path d="M98 161 v3 h1 v1 h1 v1 h1 v-1 h1 v-1 h1 v-1 h1 v-1 h1 v-3 h-1 v1 h-1 v1 h-1 v1 h-1 v1 h-1 v-1 h-1 v-1 z" fill="#000"/>
</svg>
<div class="menu" style="left:199px;top:108px;width:114px;height:40px"></div>
<div class="hl" style="left:202px;top:111px;width:108px;height:17px"></div>
<svg class="txt" width="612" height="460" viewBox="0 0 612 460">
<text transform="translate(23.90,16) scale(0.8814,1)" font-size="12.5px" font-weight="bold" fill="#000" style="color:#000">Single</text>
<text transform="translate(62.20,16) scale(0.9263,1)" font-size="12.5px" font-weight="bold" fill="#000" style="color:#000">Frequency</text>
<text transform="translate(125.50,16) scale(0.8705,1)" font-size="12.5px" font-weight="bold" fill="#000" style="color:#000">Analysis</text>
<text transform="translate(175.50,16) scale(0.9187,1)" font-size="12.5px" font-weight="bold" fill="#000" style="color:#000">(Circles)</text>
<text transform="translate(9.70,35) scale(0.7832,1)" font-size="12px" font-weight="normal" fill="#000" style="color:#000">File</text>
<text transform="translate(37.50,35) scale(0.8731,1)" font-size="12px" font-weight="normal" fill="#000" style="color:#000">Frequency</text>
<text transform="translate(98.45,35) scale(0.9205,1)" font-size="12px" font-weight="normal" fill="#fff" style="color:#fff">View</text>
<text transform="translate(134.20,35) scale(0.9285,1)" font-size="12px" font-weight="normal" fill="#000" style="color:#000">Move</text>
<text transform="translate(172.95,35) scale(0.9468,1)" font-size="12px" font-weight="normal" fill="#000" style="color:#000">Match</text>
<text transform="translate(214.70,35) scale(0.8717,1)" font-size="12px" font-weight="normal" fill="#000" style="color:#000">Options</text>
<text transform="translate(263.45,35) scale(0.8439,1)" font-size="12px" font-weight="normal" fill="#000" style="color:#000">File:</text>
<text transform="translate(284.99,35) scale(0.9125,1)" font-size="12px" font-weight="normal" fill="#000" style="color:#000">...linc2sch\N68819SL.S2P</text>
<text transform="translate(109.40,55) scale(0.8425,1)" font-size="12px" font-weight="normal" fill="#000" style="color:#000">Stability</text>
<text transform="translate(109.40,72) scale(0.8784,1)" font-size="12px" font-weight="normal" fill="#000" style="color:#000">Gain,</text>
<text transform="translate(137.40,72) scale(0.8326,1)" font-size="12px" font-weight="normal" fill="#000" style="color:#000">Ga</text>
<text transform="translate(109.40,89) scale(0.8784,1)" font-size="12px" font-weight="normal" fill="#000" style="color:#000">Gain,</text>
<text transform="translate(137.40,89) scale(0.8326,1)" font-size="12px" font-weight="normal" fill="#000" style="color:#000">Gp</text>
<text transform="translate(109.40,106) scale(0.7998,1)" font-size="12px" font-weight="normal" fill="#000" style="color:#000">Noise</text>
<text transform="translate(139.70,106) scale(0.7960,1)" font-size="12px" font-weight="normal" fill="#000" style="color:#000">and</text>
<text transform="translate(160.60,106) scale(0.8143,1)" font-size="12px" font-weight="normal" fill="#000" style="color:#000">Ga</text>
<text transform="translate(109.40,123) scale(0.8076,1)" font-size="12px" font-weight="normal" fill="#fff" style="color:#fff">Maximum</text>
<text transform="translate(156.80,123) scale(0.8714,1)" font-size="12px" font-weight="normal" fill="#fff" style="color:#fff">Gain</text>
<text transform="translate(109.40,140) scale(0.8116,1)" font-size="12px" font-weight="normal" fill="#000" style="color:#000">Minimum</text>
<text transform="translate(154.40,140) scale(0.8257,1)" font-size="12px" font-weight="normal" fill="#000" style="color:#000">Noise</text>
<text transform="translate(109.40,166) scale(0.8425,1)" font-size="12px" font-weight="normal" fill="#000" style="color:#000">Stability</text>
<text transform="translate(148.20,166) scale(0.9000,1)" font-size="12px" font-weight="normal" fill="#000" style="color:#000">On</text>
<text transform="translate(109.40,183) scale(0.8542,1)" font-size="12px" font-weight="normal" fill="#000" style="color:#000">Freq</text>
<text transform="translate(133.50,183) scale(0.8753,1)" font-size="12px" font-weight="normal" fill="#000" style="color:#000">Sweep</text>
<text transform="translate(109.40,200) scale(0.8299,1)" font-size="12px" font-weight="normal" fill="#000" style="color:#000">Clear</text>
<text transform="translate(214.50,123) scale(0.8259,1)" font-size="12px" font-weight="normal" fill="#fff" style="color:#fff">MAG</text>
<text transform="translate(241.90,123) scale(0.8050,1)" font-size="12px" font-weight="normal" fill="#fff" style="color:#fff">(Gmax)</text>
<text transform="translate(214.50,140) scale(0.7998,1)" font-size="12px" font-weight="normal" fill="#000" style="color:#000">Noise</text>
<text transform="translate(244.70,140) scale(0.8166,1)" font-size="12px" font-weight="normal" fill="#000" style="color:#000">and</text>
<text transform="translate(266.00,140) scale(0.8259,1)" font-size="12px" font-weight="normal" fill="#000" style="color:#000">MAG</text>
<text transform="translate(122.60,326) scale(0.8859,1)" font-size="12.5px" font-weight="bold" fill="#000" style="color:#000">Input</text>
<text transform="translate(156.50,326) scale(0.9102,1)" font-size="12.5px" font-weight="bold" fill="#000" style="color:#000">Plane</text>
<text transform="translate(422.70,326) scale(0.8686,1)" font-size="12.5px" font-weight="bold" fill="#000" style="color:#000">Output</text>
<text transform="translate(464.40,326) scale(0.9402,1)" font-size="12.5px" font-weight="bold" fill="#000" style="color:#000">Plane</text>
<text transform="translate(13.90,391) scale(0.8619,1)" font-size="12.5px" font-weight="bold" fill="#000" style="color:#000">Freq</text>
<text transform="translate(42.70,391) scale(0.9402,1)" font-size="12.5px" font-weight="bold" fill="#000" style="color:#000">(MHz):</text>
<text transform="translate(83.70,391) scale(0.9953,1)" font-size="12.5px" font-weight="bold" fill="#000" style="color:#000">210.00</text>
<text transform="translate(162.00,391) scale(0.9041,1)" font-size="12.5px" font-weight="bold" fill="#000" style="color:#000">Analysis:</text>
<text transform="translate(216.70,391) scale(0.9061,1)" font-size="12.5px" font-weight="bold" fill="#000" style="color:#000">Stability</text>
<text transform="translate(301.70,391) scale(0.8333,1)" font-size="12.5px" font-weight="bold" fill="#000" style="color:#000">K</text>
<text transform="translate(313.50,391) scale(0.9571,1)" font-size="12.5px" font-weight="bold" fill="#000" style="color:#000">=</text>
<text transform="translate(325.70,391) scale(1.0359,1)" font-size="12.5px" font-weight="bold" fill="#000" style="color:#000">1.0711,</text>
<text transform="translate(375.50,391) scale(0.9331,1)" font-size="12.5px" font-weight="bold" fill="#000" style="color:#000">Delta</text>
<text transform="translate(409.70,391) scale(0.9429,1)" font-size="12.5px" font-weight="bold" fill="#000" style="color:#000">=</text>
<text transform="translate(420.50,391) scale(1.0110,1)" font-size="12.5px" font-weight="bold" fill="#000" style="color:#000">0.7805</text>
<text transform="translate(463.90,391) scale(0.8283,1)" font-size="12.5px" font-weight="bold" fill="#000" style="color:#000">at</text>
<text transform="translate(478.90,391) scale(0.9267,1)" font-size="12.5px" font-weight="bold" fill="#000" style="color:#000">angle</text>
<text transform="translate(514.40,391) scale(0.9741,1)" font-size="12.5px" font-weight="bold" fill="#000" style="color:#000">-7.23</text>
<text transform="translate(13.90,404) scale(0.8859,1)" font-size="12.5px" font-weight="bold" fill="#000" style="color:#000">Input</text>
<text transform="translate(46.70,404) scale(0.9035,1)" font-size="12.5px" font-weight="bold" fill="#000" style="color:#000">Circle:</text>
<text transform="translate(86.20,404) scale(0.9478,1)" font-size="12.5px" font-weight="bold" fill="#000" style="color:#000">Stable</text>
<text transform="translate(127.00,404) scale(0.8737,1)" font-size="12.5px" font-weight="bold" fill="#000" style="color:#000">Inside</text>
<text transform="translate(164.90,404) scale(0.8940,1)" font-size="12.5px" font-weight="bold" fill="#000" style="color:#000">Circle</text>
<text transform="translate(13.90,417) scale(0.8758,1)" font-size="12.5px" font-weight="bold" fill="#000" style="color:#000">Output</text>
<text transform="translate(55.50,417) scale(0.9141,1)" font-size="12.5px" font-weight="bold" fill="#000" style="color:#000">Circle:</text>
<text transform="translate(95.50,417) scale(0.9451,1)" font-size="12.5px" font-weight="bold" fill="#000" style="color:#000">Stable</text>
<text transform="translate(136.00,417) scale(0.8654,1)" font-size="12.5px" font-weight="bold" fill="#000" style="color:#000">Inside</text>
<text transform="translate(173.90,417) scale(0.8997,1)" font-size="12.5px" font-weight="bold" fill="#000" style="color:#000">Circle</text>
<text transform="translate(13.90,430) scale(0.9060,1)" font-size="12.5px" font-weight="bold" fill="#000" style="color:#000">Radius</text>
<text transform="translate(56.90,430) scale(0.7756,1)" font-size="12.5px" font-weight="bold" fill="#000" style="color:#000">of</text>
<text transform="translate(71.70,430) scale(0.8381,1)" font-size="12.5px" font-weight="bold" fill="#000" style="color:#000">input</text>
<text transform="translate(103.50,430) scale(0.8926,1)" font-size="12.5px" font-weight="bold" fill="#000" style="color:#000">circle</text>
<text transform="translate(138.70,430) scale(0.9286,1)" font-size="12.5px" font-weight="bold" fill="#000" style="color:#000">=</text>
<text transform="translate(150.20,430) scale(0.9944,1)" font-size="12.5px" font-weight="bold" fill="#000" style="color:#000">3.4784,</text>
<text transform="translate(196.70,430) scale(0.8986,1)" font-size="12.5px" font-weight="bold" fill="#000" style="color:#000">Center</text>
<text transform="translate(237.90,430) scale(0.7598,1)" font-size="12.5px" font-weight="bold" fill="#000" style="color:#000">of</text>
<text transform="translate(252.90,430) scale(0.8094,1)" font-size="12.5px" font-weight="bold" fill="#000" style="color:#000">input</text>
<text transform="translate(284.20,430) scale(0.9048,1)" font-size="12.5px" font-weight="bold" fill="#000" style="color:#000">circle</text>
<text transform="translate(319.90,430) scale(0.9857,1)" font-size="12.5px" font-weight="bold" fill="#000" style="color:#000">=</text>
<text transform="translate(330.70,430) scale(0.9953,1)" font-size="12.5px" font-weight="bold" fill="#000" style="color:#000">2.3766</text>
<text transform="translate(373.80,430) scale(0.8200,1)" font-size="12.5px" font-weight="bold" fill="#000" style="color:#000">at</text>
<text transform="translate(388.90,430) scale(0.9267,1)" font-size="12.5px" font-weight="bold" fill="#000" style="color:#000">angle</text>
<text transform="translate(423.90,430) scale(1.0013,1)" font-size="12.5px" font-weight="bold" fill="#000" style="color:#000">-168.43</text>
<text transform="translate(13.90,443) scale(0.9060,1)" font-size="12.5px" font-weight="bold" fill="#000" style="color:#000">Radius</text>
<text transform="translate(56.90,443) scale(0.7756,1)" font-size="12.5px" font-weight="bold" fill="#000" style="color:#000">of</text>
<text transform="translate(71.70,443) scale(0.8941,1)" font-size="12.5px" font-weight="bold" fill="#000" style="color:#000">output</text>
<text transform="translate(112.70,443) scale(0.8804,1)" font-size="12.5px" font-weight="bold" fill="#000" style="color:#000">circle</text>
<text transform="translate(147.20,443) scale(0.9429,1)" font-size="12.5px" font-weight="bold" fill="#000" style="color:#000">=</text>
<text transform="translate(159.70,443) scale(0.9725,1)" font-size="12.5px" font-weight="bold" fill="#000" style="color:#000">1.8828,</text>
<text transform="translate(205.40,443) scale(0.8885,1)" font-size="12.5px" font-weight="bold" fill="#000" style="color:#000">Center</text>
<text transform="translate(245.90,443) scale(0.7756,1)" font-size="12.5px" font-weight="bold" fill="#000" style="color:#000">of</text>
<text transform="translate(260.90,443) scale(0.8790,1)" font-size="12.5px" font-weight="bold" fill="#000" style="color:#000">output</text>
<text transform="translate(301.20,443) scale(0.9018,1)" font-size="12.5px" font-weight="bold" fill="#000" style="color:#000">circle</text>
<text transform="translate(336.20,443) scale(0.9286,1)" font-size="12.5px" font-weight="bold" fill="#000" style="color:#000">=</text>
<text transform="translate(346.50,443) scale(1.0083,1)" font-size="12.5px" font-weight="bold" fill="#000" style="color:#000">0.7153</text>
<text transform="translate(389.80,443) scale(0.8283,1)" font-size="12.5px" font-weight="bold" fill="#000" style="color:#000">at</text>
<text transform="translate(404.70,443) scale(0.9267,1)" font-size="12.5px" font-weight="bold" fill="#000" style="color:#000">angle</text>
<text transform="translate(439.70,443) scale(1.0013,1)" font-size="12.5px" font-weight="bold" fill="#000" style="color:#000">-158.21</text>
<g shape-rendering="crispEdges"><rect x="18" y="36" width="2" height="1" fill="#000"/>
<rect x="38" y="36" width="6" height="1" fill="#000"/>
<rect x="98" y="36" width="8" height="1" fill="#fff"/>
<rect x="155" y="36" width="6" height="1" fill="#000"/>
<rect x="173" y="36" width="9" height="1" fill="#000"/>
<rect x="215" y="36" width="8" height="1" fill="#000"/>
<rect x="109" y="56" width="7" height="1" fill="#000"/>
<rect x="145" y="73" width="6" height="1" fill="#000"/>
<rect x="145" y="90" width="6" height="1" fill="#000"/>
<rect x="109" y="107" width="7" height="1" fill="#000"/>
<rect x="109" y="124" width="8" height="1" fill="#fff"/>
<rect x="167" y="141" width="2" height="1" fill="#000"/>
<rect x="148" y="167" width="9" height="1" fill="#000"/>
<rect x="109" y="184" width="7" height="1" fill="#000"/>
<rect x="109" y="201" width="8" height="1" fill="#000"/>
<rect x="214" y="124" width="9" height="1" fill="#fff"/>
<rect x="214" y="141" width="7" height="1" fill="#000"/></g>
<ellipse cx="545.0" cy="383.8" rx="2" ry="1.7" fill="#000"/><rect x="547.8" y="389" width="2.2" height="2" fill="#000"/>
<ellipse cx="469.2" cy="422.8" rx="2" ry="1.7" fill="#000"/><rect x="472.0" y="428" width="2.2" height="2" fill="#000"/>
<ellipse cx="485.0" cy="435.8" rx="2" ry="1.7" fill="#000"/><rect x="487.8" y="441" width="2.2" height="2" fill="#000"/>
</svg>
<svg width="612" height="460" viewBox="0 0 612 460"><path d="M301.5 118 L321 121.3 L314.5 126.7 L327 144 L319.3 149.6 L307.4 132.2 L299.2 137 Z" fill="#000"/></svg>
</body></html>
